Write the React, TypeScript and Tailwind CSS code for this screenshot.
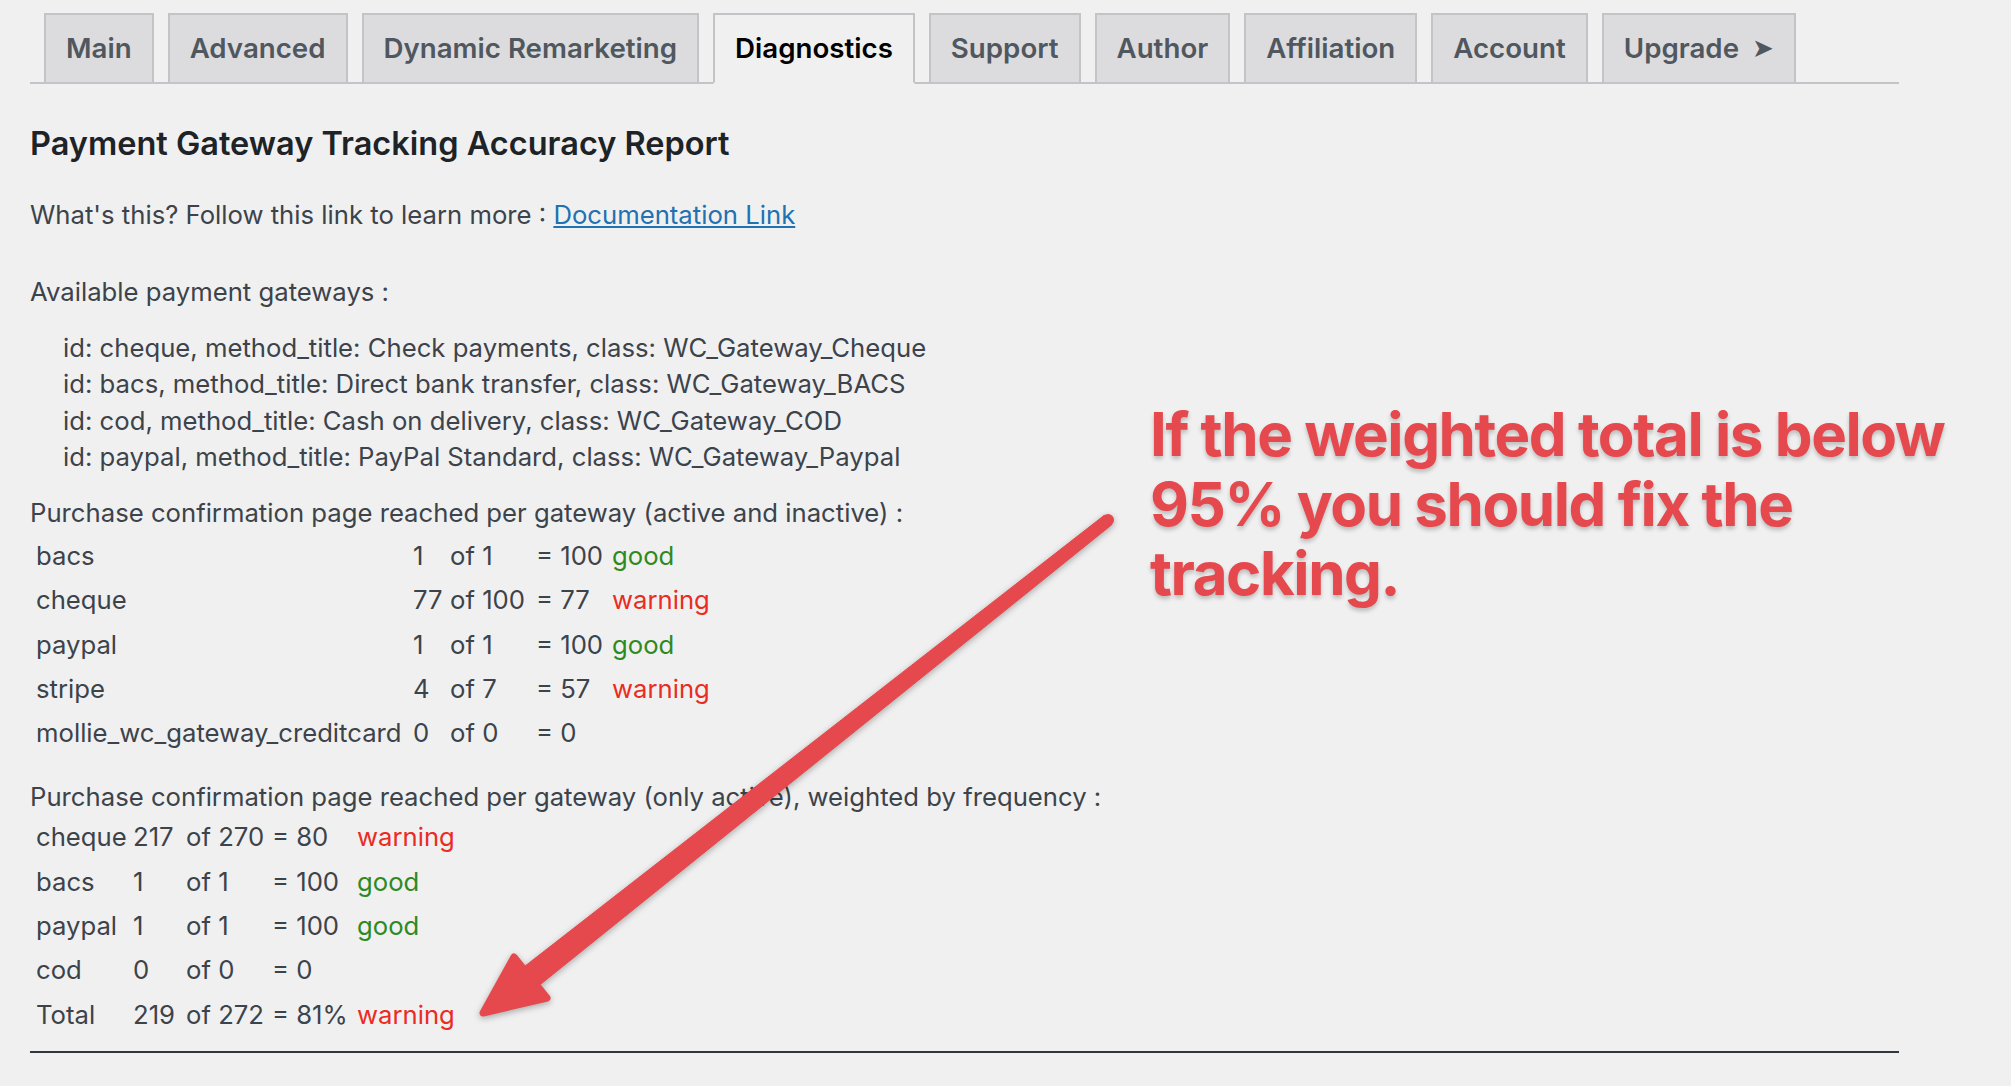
import React from "react";

const tabs = [
  { label: "Main" },
  { label: "Advanced" },
  { label: "Dynamic Remarketing" },
  { label: "Diagnostics", active: true },
  { label: "Support" },
  { label: "Author" },
  { label: "Affiliation" },
  { label: "Account" },
  { label: "Upgrade", arrow: true },
];

const gateways = [
  "id: cheque, method_title: Check payments, class: WC_Gateway_Cheque",
  "id: bacs, method_title: Direct bank transfer, class: WC_Gateway_BACS",
  "id: cod, method_title: Cash on delivery, class: WC_Gateway_COD",
  "id: paypal, method_title: PayPal Standard, class: WC_Gateway_Paypal",
];

type Row = { name: string; count: string; of: string; eq: string; status?: "good" | "warning" };

const allRows: Row[] = [
  { name: "bacs", count: "1", of: "of 1", eq: "= 100", status: "good" },
  { name: "cheque", count: "77", of: "of 100", eq: "= 77", status: "warning" },
  { name: "paypal", count: "1", of: "of 1", eq: "= 100", status: "good" },
  { name: "stripe", count: "4", of: "of 7", eq: "= 57", status: "warning" },
  { name: "mollie_wc_gateway_creditcard", count: "0", of: "of 0", eq: "= 0" },
];

const activeRows: Row[] = [
  { name: "cheque", count: "217", of: "of 270", eq: "= 80", status: "warning" },
  { name: "bacs", count: "1", of: "of 1", eq: "= 100", status: "good" },
  { name: "paypal", count: "1", of: "of 1", eq: "= 100", status: "good" },
  { name: "cod", count: "0", of: "of 0", eq: "= 0" },
  { name: "Total", count: "219", of: "of 272", eq: "= 81%", status: "warning" },
];

const Status: React.FC<{ status?: "good" | "warning" }> = ({ status }) => {
  if (!status) return <span />;
  return (
    <span className={status === "good" ? "text-[#2e8a1d]" : "text-[#ea2c22]"}>
      {status}
    </span>
  );
};

const StatsTable: React.FC<{ rows: Row[]; cols: string }> = ({ rows, cols }) => (
  <div className="pl-[6px]">
    {rows.map((r, i) => (
      <div key={i} className={`grid h-[44.4px] items-center ${cols}`}>
        <span>{r.name}</span>
        <span>{r.count}</span>
        <span>{r.of}</span>
        <span>{r.eq}</span>
        <Status status={r.status} />
      </div>
    ))}
  </div>
);

export default function App() {
  return (
    <div className="relative h-[1086px] w-[2011px] overflow-hidden bg-[#f0f0f1] font-['Inter',sans-serif] text-[25.7px] leading-[36.4px] text-[#3c434a]">
      <div className="ml-[30px] w-[1869px] pt-[13px]">
        <nav className="flex items-end border-b-2 border-[#c3c4c7]">
          {tabs.map((t) =>
            t.active ? (
              <span
                key={t.label}
                className="-mb-[2px] ml-[14px] border-2 border-[#c3c4c7] border-b-[#f0f0f1] bg-[#f0f0f1] px-[20px] py-[11px] text-[27.7px] font-semibold leading-[45px] text-black"
              >
                {t.label}
              </span>
            ) : (
              <span
                key={t.label}
                className="ml-[14px] flex items-center border-2 border-b-0 border-[#c3c4c7] bg-[#dcdcde] px-[20px] py-[11px] text-[27.7px] font-semibold leading-[45px] text-[#50575e]"
              >
                {t.label}
                {t.arrow && (
                  <span className="ml-[13px] font-['DejaVu_Sans',sans-serif] text-[26px] leading-[45px]">➤</span>
                )}
              </span>
            )
          )}
        </nav>

        <h2 className="mt-[38px] text-[32.5px] font-semibold leading-[44px] text-[#1d2327]">
          Payment Gateway Tracking Accuracy Report
        </h2>

        <p className="mt-[31px]">
          What's this? Follow this link to learn more :{" "}
          <a href="#" className="text-[#2271b1] underline">
            Documentation Link
          </a>
        </p>

        <p className="mt-[41px]">Available payment gateways :</p>
        <ul className="ml-[33px] mt-[19px]">
          {gateways.map((g) => (
            <li key={g}>{g}</li>
          ))}
        </ul>

        <p className="mt-[20px]">Purchase confirmation page reached per gateway (active and inactive) :</p>
        <div className="mt-[2px]">
          <StatsTable rows={allRows} cols="grid-cols-[377px_37px_86px_76px_auto]" />
        </div>

        <p className="mt-[23px]">
          Purchase confirmation page reached per gateway (only active), weighted by frequency :
        </p>
        <StatsTable rows={activeRows} cols="grid-cols-[97px_53px_86px_85px_auto]" />

        <hr className="mt-[14px] h-[2px] border-0 bg-[#32373c]" />
      </div>

      {/* annotation */}
      <div className="absolute left-[1150px] top-[400px] text-[60px] font-bold leading-[69.5px] tracking-[-0.024em] text-[#e5484d] [text-shadow:0_3px_4px_rgba(0,0,0,0.22)]">
        If the weighted total is below
        <br />
        95% you should fix the
        <br />
        tracking.
      </div>

      <svg
        className="pointer-events-none absolute left-0 top-0 drop-shadow-[0_2px_3px_rgba(0,0,0,0.3)]"
        width="2011"
        height="1086"
        viewBox="0 0 2011 1086"
      >
        <g fill="#e5484d" stroke="#e5484d" strokeLinejoin="round">
          <circle cx="1108" cy="520" r="6" stroke="none" />
          <polygon points="1111.7,524.7 1104.3,515.3 521.2,969.1 536,987.9" strokeWidth="1" />
          <polygon points="483,1013 514,957 547,998" strokeWidth="7" />
        </g>
      </svg>
    </div>
  );
}
